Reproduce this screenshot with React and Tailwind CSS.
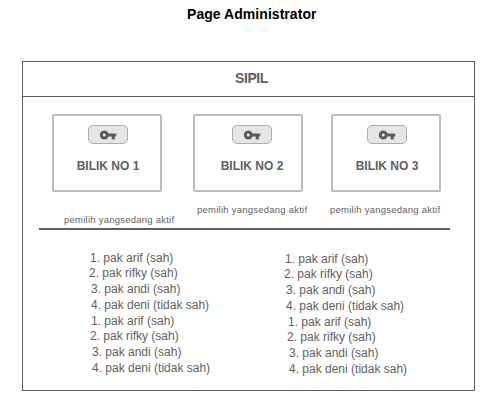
import React from "react";
import { MdVpnKey } from "react-icons/md";

const booths = [
  { label: "BILIK NO 1", caption: "pemilih yangsedang aktif", cell: "ml-[29px]", inner: "pl-[2px]", captionPos: "mt-[21px] ml-[12px]" },
  { label: "BILIK NO 2", caption: "pemilih yangsedang aktif", cell: "ml-[31px]", inner: "pl-[8px]", captionPos: "mt-[11px] ml-[4px]" },
  { label: "BILIK NO 3", caption: "pemilih yangsedang aktif", cell: "ml-[28px]", inner: "pl-[2px]", captionPos: "mt-[11px] ml-[-1px]" },
];

const leftVoters = [
  { text: "1. pak arif (sah)", row: "h-[15px] pl-px" },
  { text: "2. pak rifky (sah)", row: "h-4" },
  { text: "3. pak andi (sah)", row: "h-4 pl-[2px]" },
  { text: "4. pak deni (tidak sah)", row: "h-4 pl-[2px]" },
  { text: "1. pak arif (sah)", row: "h-[15px] pl-[2px]" },
  { text: "2. pak rifky (sah)", row: "h-4 pl-px" },
  { text: "3. pak andi (sah)", row: "h-4 pl-[3px]" },
  { text: "4. pak deni (tidak sah)", row: "h-4 pl-[3px]" },
];

const rightVoters = [
  { text: "1. pak arif (sah)", row: "h-[15px] pl-px" },
  { text: "2. pak rifky (sah)", row: "h-4" },
  { text: "3. pak andi (sah)", row: "h-4 pl-[2px]" },
  { text: "4. pak deni (tidak sah)", row: "h-4 pl-[2px]" },
  { text: "1. pak arif (sah)", row: "h-[15px] pl-[4px]" },
  { text: "2. pak rifky (sah)", row: "h-4 pl-[3px]" },
  { text: "3. pak andi (sah)", row: "h-4 pl-[5px]" },
  { text: "4. pak deni (tidak sah)", row: "h-4 pl-[5px]" },
];

function Booth({ label, caption, cell, inner, captionPos }) {
  return (
    <div className={`w-[110px] shrink-0 ${cell}`}>
      <div className={`flex h-[78px] flex-col items-center rounded-[2px] border-2 border-[#bcbcbc] pt-[9px] ${inner}`}>
        <button className="flex h-[19px] w-10 items-center justify-center rounded-[5px] border border-[#adadad] bg-[#e6e6e6] text-[#5c5c5c]">
          <MdVpnKey size={18} />
        </button>
        <div className="mt-[14px] text-[12px] leading-4 font-bold whitespace-nowrap">{label}</div>
      </div>
      <div className={`text-[9.5px] leading-[14px] tracking-[0.24px] whitespace-nowrap ${captionPos}`}>{caption}</div>
    </div>
  );
}

function VoterList({ voters, className }) {
  return (
    <ol className={className}>
      {voters.map((v, i) => (
        <li key={i} className={`text-[12px] leading-4 whitespace-nowrap ${v.row}`}>{v.text}</li>
      ))}
    </ol>
  );
}

export default function App() {
  return (
    <main className="h-[410px] w-[498px] overflow-hidden bg-white font-['Liberation_Sans',Arial,sans-serif] text-[#5f5f5f]">
      <h1 className="h-[61px] pt-[5px] pl-[187px] text-[14px] leading-[18px] font-bold tracking-[0.05px] text-black">Page Administrator</h1>
      <section className="ml-[22px] h-[330px] w-[453px] border border-[#5f5f5f]">
        <h2 className="h-[35px] border-b border-[#5f5f5f] pt-[7px] pl-[212px] text-[14px] leading-[18px] font-bold tracking-[-0.4px]">SIPIL</h2>
        <div className="flex h-[131px] pt-[17px]">
          {booths.map((b) => <Booth key={b.label} {...b} />)}
        </div>
        <hr className="ml-4 h-[2px] w-[411px] border-0 bg-[#5f5f5f]" />
        <div className="flex pt-5">
          <VoterList voters={leftVoters} className="ml-[66px] w-[195px]" />
          <VoterList voters={rightVoters} className="mt-px" />
        </div>
      </section>
    </main>
  );
}
